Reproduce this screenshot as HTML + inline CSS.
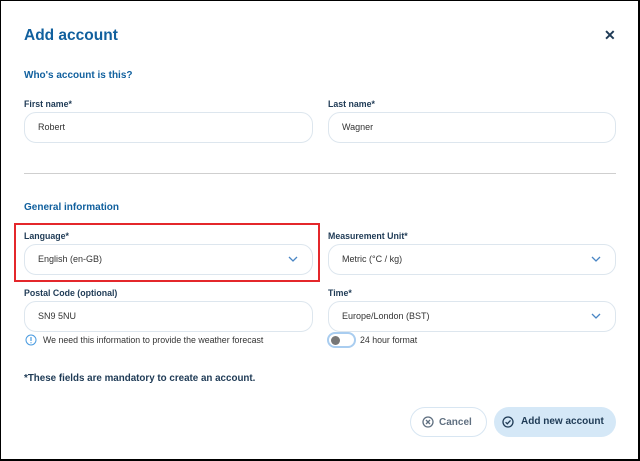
<!DOCTYPE html>
<html><head><style>
*{box-sizing:border-box;margin:0;padding:0}
body{width:640px;height:461px;background:#fff;font-family:"Liberation Sans",sans-serif;position:relative;overflow:hidden}
.frame{position:absolute;left:0;top:0;width:640px;height:461px;border:1px solid #000;border-bottom-width:2px;border-right-width:2px}
.a{position:absolute}
.title{left:24px;top:27px;font-size:15.5px;font-weight:bold;color:#11609e}
.h{font-size:10px;font-weight:bold;color:#11609e}
.lbl{font-size:8.8px;font-weight:bold;color:#1e3a55}
.inp{height:31px;border:1px solid #dde6ee;border-radius:12px;font-size:9px;color:#333;padding-left:13px;line-height:29px}
.chev{position:absolute;right:14px;top:10px}
</style></head><body>
<div class="frame"></div>
<div class="a title">Add account</div>
<div class="a" style="left:604px;top:27px;font-size:14px;font-weight:bold;color:#1e3a55">✕</div>
<div class="a h" style="left:24px;top:70px">Who's account is this?</div>
<div class="a lbl" style="left:24px;top:99px">First name*</div>
<div class="a lbl" style="left:328px;top:99px">Last name*</div>
<div class="a inp" style="left:24px;top:112px;width:289px">Robert</div>
<div class="a inp" style="left:328px;top:112px;width:288px">Wagner</div>
<div class="a" style="left:24px;top:173px;width:592px;height:1px;background:#cfcfcf"></div>
<div class="a h" style="left:24px;top:202px">General information</div>
<div class="a" style="left:14px;top:223px;width:306px;height:59px;border:2px solid #e4272b"></div>
<div class="a lbl" style="left:24px;top:231px">Language*</div>
<div class="a lbl" style="left:328px;top:231px">Measurement Unit*</div>
<div class="a inp" style="left:24px;top:244px;width:289px">English (en-GB)<svg class="chev" width="10" height="8" viewBox="0 0 10 8"><path d="M1 2l4 4 4-4" fill="none" stroke="#4a86c5" stroke-width="1.3"/></svg></div>
<div class="a inp" style="left:328px;top:244px;width:288px">Metric (°C / kg)<svg class="chev" width="10" height="8" viewBox="0 0 10 8"><path d="M1 2l4 4 4-4" fill="none" stroke="#4a86c5" stroke-width="1.3"/></svg></div>
<div class="a lbl" style="left:24px;top:288px">Postal Code (optional)</div>
<div class="a lbl" style="left:328px;top:288px">Time*</div>
<div class="a inp" style="left:24px;top:301px;width:289px">SN9 5NU</div>
<div class="a inp" style="left:328px;top:301px;width:288px">Europe/London (BST)<svg class="chev" width="10" height="8" viewBox="0 0 10 8"><path d="M1 2l4 4 4-4" fill="none" stroke="#4a86c5" stroke-width="1.3"/></svg></div>
<svg class="a" style="left:25px;top:334px" width="12" height="12" viewBox="0 0 12 12"><circle cx="6" cy="6" r="5" fill="none" stroke="#4a9be0" stroke-width="1"/><path d="M6 3v4M6 8.3v1" stroke="#4a9be0" stroke-width="1.2"/></svg>
<div class="a" style="left:43px;top:335px;font-size:8.8px;color:#333">We need this information to provide the weather forecast</div>
<div class="a" style="left:327px;top:332px;width:29px;height:16px;border:2px solid #a9cdf0;border-radius:8px;background:#fff"><div style="position:absolute;left:2px;top:2px;width:9px;height:9px;border-radius:50%;background:#777"></div></div>
<div class="a" style="left:360px;top:335px;font-size:8.8px;color:#333">24 hour format</div>
<div class="a" style="left:24px;top:373px;font-size:9.8px;font-weight:bold;color:#1e3a55">*These fields are mandatory to create an account.</div>
<div class="a" style="left:410px;top:407px;width:77px;height:30px;border:1px solid #d8e6f2;border-radius:15px;font-size:10px;font-weight:bold;color:#5f6f80;line-height:29px;padding-left:28px">Cancel
<svg style="position:absolute;left:11px;top:8px" width="12" height="12" viewBox="0 0 12 12"><circle cx="6" cy="6" r="5" fill="none" stroke="#5f6f80" stroke-width="1.3"/><path d="M4 4l4 4M8 4l-4 4" stroke="#5f6f80" stroke-width="1.3"/></svg></div>
<div class="a" style="left:494px;top:407px;width:122px;height:30px;background:#d5e8f7;border-radius:15px;font-size:10px;font-weight:bold;color:#1e3a55;line-height:30px;padding-left:27px">Add new account
<svg style="position:absolute;left:8px;top:9px" width="12" height="12" viewBox="0 0 12 12"><circle cx="6" cy="6" r="5" fill="none" stroke="#1e3a55" stroke-width="1.3"/><path d="M3.6 6.2l1.7 1.6 3.2-3.4" fill="none" stroke="#1e3a55" stroke-width="1.3"/></svg></div>
</body></html>
